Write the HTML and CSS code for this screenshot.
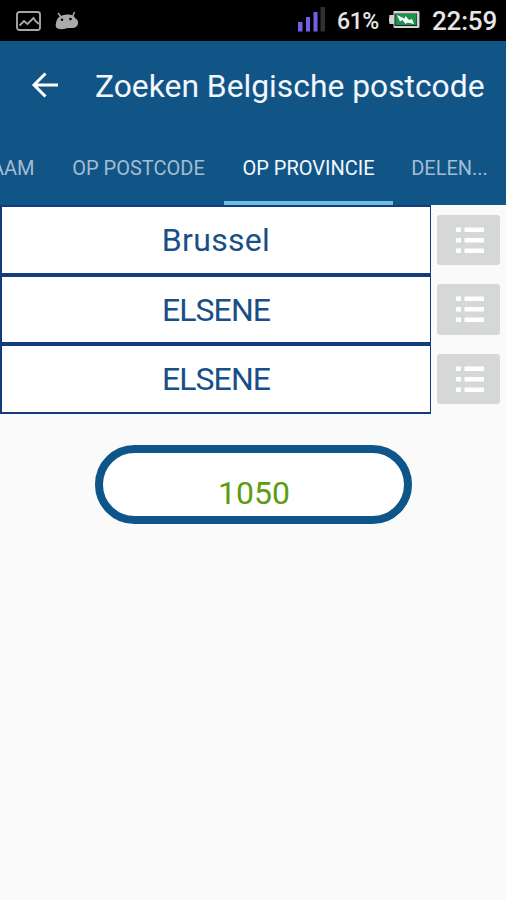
FILE: index.html
```html
<!DOCTYPE html>
<html lang="nl">
<head>
<meta charset="utf-8">
<title>Zoeken Belgische postcode</title>
<link rel="stylesheet" href="styles.css">
</head>
<body>
<svg class="defs" aria-hidden="true">
  <symbol id="list" viewBox="0 0 28 28">
    <path fill="#fff" d="M0 1.500h5v4.500H0zM8.500 1.500H28v4.500H8.500zM0 12h5v4.500H0zM8.500 12H28v4.500H8.500zM0 22.500h5V27H0zM8.500 22.500H28V27H8.500z"/>
  </symbol>
</svg>
<div class="status">
  <svg class="picture" width="26" height="20" viewBox="0 0 26 20" fill="none" stroke="#a6a6a6">
    <rect x="1" y="1" width="23" height="18" rx="2.500" stroke-width="1.900"/>
    <path d="M3.500 14.500 8 10l3.500 3 6-6 2 3 3.500 3" stroke-width="1.900"/>
  </svg>
  <svg class="droid" width="24" height="20" viewBox="0 0 24 20">
    <path d="M3 2l3 4M19.500 1l-2 5" stroke="#aaa" stroke-width="1.500"/>
    <path fill="#aaa" d="M1 12C2 6 6 4 12 3.500c5 0 7 1.500 8.500 4C24 9 24 15 20 16.500c-2 .8-6 .3-8.500.8-3 1.200-7 1.200-9.500 0C.5 16 .5 14 1 12z"/>
    <circle cx="7" cy="8.800" r="1.300"/><circle cx="15.500" cy="8" r="1.300"/>
  </svg>
  <svg class="signal" width="28" height="26" viewBox="0 0 28 26">
    <path fill="#745ee6" d="M0 16h4.500v9.500H0zM8 11h4v14.500H8zM15.500 6h4v19.500h-4z"/>
    <path fill="#303030" d="M22.500 1h4.500v24.500h-4.500z"/>
  </svg>
  <span class="percent">61%</span>
  <svg class="battery" width="33" height="19" viewBox="0 0 33 19">
    <path d="M5.500 1H30q1.500 0 1.500 1.500v14q0 1.500-1.500 1.500H7q-1.500 0-1.500-1.500V14H1.500q-1-4.500 0-9h4z" fill="#d4d4d4"/>
    <path d="M6.500 3.500h22.500v12.500H6.500z" fill="#222"/>
    <path d="M7.500 4h21v11h-21z" fill="#179447"/>
    <path d="M9 5l7.500 3.500 1-2.500 3.500 4 3-1 2 5-6.500-1.500-2 1.500-3-4-2.500 1.500z" fill="#fff"/>
  </svg>
  <span class="clock">22:59</span>
</div>
<header class="header">
  <div class="toolbar">
    <svg class="back" width="28" height="28" viewBox="0 0 28 28" fill="none" stroke="#fff" stroke-width="3">
      <path d="M27 14H3M14.500 2.500 3 14l11.500 11.500"/>
    </svg>
    <h1 class="title">Zoeken Belgische postcode</h1>
  </div>
  <nav class="tabs">
    <span class="tab tab-name">OP NAAM</span>
    <span class="tab tab-code">OP POSTCODE</span>
    <span class="tab tab-province">OP PROVINCIE</span>
    <span class="tab tab-share">DELEN...</span>
  </nav>
</header>
<main>
  <div class="rows">
    <div class="row"><div class="field city"><span>Brussel</span></div><button class="pick" aria-label="Lijst"><svg width="28" height="28"><use href="#list"/></svg></button></div>
    <div class="row"><div class="field caps"><span>ELSENE</span></div><button class="pick" aria-label="Lijst"><svg width="28" height="28"><use href="#list"/></svg></button></div>
    <div class="row"><div class="field caps"><span>ELSENE</span></div><button class="pick" aria-label="Lijst"><svg width="28" height="28"><use href="#list"/></svg></button></div>
  </div>
  <div class="result">1050</div>
</main>
</body>
</html>
```
FILE: styles.css
```css
* { box-sizing: border-box; }
body {
  margin: 0;
  height: 900px;
  overflow: hidden;
  background: #fafafa;
  font-family: Roboto, "Liberation Sans", sans-serif;
}
.defs { display: none; }
.status {
  display: flex;
  align-items: flex-start;
  height: 41px;
  background: #000;
  color: #e6e6e6;
  white-space: nowrap;
}
.status svg { flex: none; }
.picture { margin: 11px 0 0 16px; }
.droid { margin: 11px 0 0 13px; }
.signal { margin: 6px 0 0 219px; }
.percent {
  width: 43px;
  margin: 7px 0 0 11px;
  font-size: 23px;
  font-weight: 500;
  letter-spacing: -0.400px;
  line-height: 30px;
}
.battery { margin: 10px 0 0 8px; }
.clock {
  margin: 5px 0 0 11px;
  font-size: 26px;
  font-weight: 500;
  letter-spacing: -0.200px;
  line-height: 32px;
}
.header {
  height: 164px;
  background: #115587;
}
.toolbar {
  display: flex;
  align-items: center;
  height: 90px;
  padding: 0 0 2px 31px;
}
.title {
  margin: 1px 0 0 36px;
  color: #f3f7fc;
  font-size: 31.800px;
  font-weight: 400;
  line-height: 40px;
  white-space: nowrap;
}
.tabs {
  display: flex;
  height: 74px;
  overflow: hidden;
}
.tab {
  display: flex;
  flex: none;
  justify-content: center;
  height: 74px;
  padding-top: 24px;
  color: #a2bdd2;
  font-size: 20px;
  line-height: 26px;
  white-space: nowrap;
}
.tab-name {
  justify-content: flex-end;
  width: 53px;
  padding-right: 18.500px;
}
.tab-code { width: 171px; }
.tab-province {
  width: 169px;
  border-bottom: 4px solid #71bde0;
  color: #f3f7fc;
}
.tab-share { width: 113px; }
.rows {
  width: 506px;
  height: 208.500px;
}
.row {
  display: flex;
  height: 69.500px;
}
.field {
  display: flex;
  justify-content: center;
  width: 431px;
  padding-top: 14px;
  background: #fff;
  border: 2px solid #123c7c;
  border-right-width: 1.500px;
  color: #174f86;
  font-size: 32px;
  line-height: 38px;
}
.city { letter-spacing: 0.300px; }
.caps { letter-spacing: -0.900px; }
.pick {
  display: flex;
  align-items: center;
  justify-content: center;
  width: 63px;
  height: 50.500px;
  margin: 9.500px 0 0 6px;
  padding: 0 0 0 3px;
  background: #d6d8d7;
  border: 0;
  border-radius: 3px;
}
.result {
  width: 317px;
  height: 79px;
  margin: 31.500px 0 0 95px;
  padding: 21px 0 0 1px;
  background: #fff;
  border: 8px solid #0e558a;
  border-radius: 40px;
  color: #5c9b12;
  font-size: 32px;
  line-height: 38px;
  text-align: center;
}
```
